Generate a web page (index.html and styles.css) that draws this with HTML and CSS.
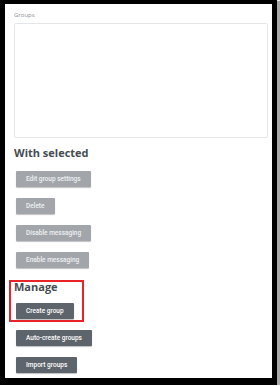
FILE: index.html
```html
<!DOCTYPE html>
<html lang="en">
<head>
    <meta charset="UTF-8">
    <title>Groups</title>
    <link rel="stylesheet" href="styles.css">
</head>
<body>
    <div class="frame">
        <label class="field-label" for="groups">Groups</label>
        <div class="listbox" id="groups"></div>

        <h3 class="section-title">With selected</h3>
        <div class="button-list">
            <button class="btn disabled">Edit group settings</button>
            <button class="btn disabled">Delete</button>
            <button class="btn disabled">Disable messaging</button>
            <button class="btn disabled">Enable messaging</button>
        </div>

        <h3 class="section-title">Manage</h3>
        <div class="button-list manage">
            <button class="btn">Create group</button>
            <button class="btn">Auto-create groups</button>
            <button class="btn">Import groups</button>
        </div>

        <!-- annotation box round "Manage" + "Create group" -->
        <div class="highlight"></div>
    </div>
</body>
</html>
```

FILE: styles.css
```css
body {
    margin: 0;
    padding: 0;
    background: #fff;
    font-family: 'Open Sans', sans-serif;
}

.frame {
    position: relative;
    box-sizing: border-box;
    width: 277px;
    height: 385px;
    border-style: solid;
    border-color: #000;
    border-width: 4px 5px 7px 5px;
    box-shadow: 3px 1px 1px #a8a8a8;
    background: #fff;
    padding: 7px 0 0 9px;
}

.field-label {
    display: block;
    font-size: 6px;
    line-height: 8px;
    color: #8a8f94;
}

.listbox {
    box-sizing: border-box;
    width: 254px;
    height: 115px;
    margin-top: 4px;
    border: 1px solid #e4e6e8;
    border-radius: 2px;
}

.section-title {
    margin: 7px 0 0 0;
    font-size: 11px;
    line-height: 16px;
    font-weight: 700;
    color: #464c52;
}

.button-list {
    display: flex;
    flex-direction: column;
    align-items: flex-start;
    gap: 11px;
    margin: 10px 0 11px 2px;
}

.button-list.manage {
    margin-top: 8px;
}

.btn {
    height: 16px;
    padding: 0 10px;
    border: none;
    border-radius: 1px;
    background-color: #5e646b;
    color: #fff;
    font-family: 'Roboto', sans-serif;
    font-size: 6.5px;
    font-weight: 500;
    box-shadow: 0 1px 1px rgba(0, 0, 0, 0.25);
    cursor: pointer;
}

.btn.disabled {
    background-color: #a2a6ab;
    color: #eef0f2;
}

.highlight {
    position: absolute;
    left: 4px;
    top: 276px;
    width: 75px;
    height: 42px;
    box-sizing: border-box;
    border: 2px solid #e8232a;
}
```
